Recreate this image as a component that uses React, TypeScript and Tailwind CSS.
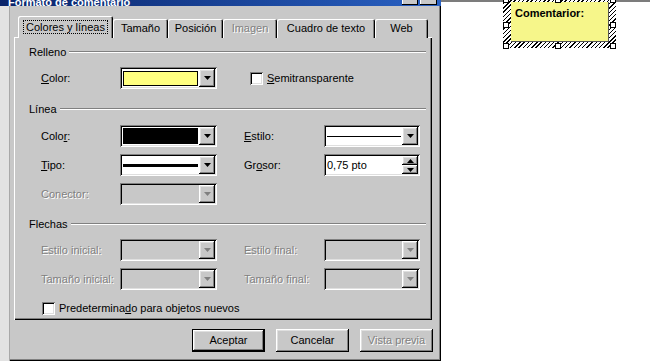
import type { ReactNode } from 'react';

const sunken =
  'shadow-[inset_1px_1px_#808080,inset_-1px_-1px_#fff,inset_2px_2px_#000,inset_-2px_-2px_#dfdfdf]';
const raised =
  'shadow-[inset_-1px_-1px_#000,inset_1px_1px_#fff,inset_-2px_-2px_#808080,inset_2px_2px_#dfdfdf]';
const dimText = 'text-[#808080] [text-shadow:1px_1px_0_#fff]';

function Arrow({ up, disabled }: { up?: boolean; disabled?: boolean }) {
  return (
    <svg width="7" height="4" viewBox="0 0 7 4">
      <path d={up ? 'M3.5 0L7 4H0z' : 'M0 0h7L3.5 4z'} fill={disabled ? '#808080' : '#000'} />
    </svg>
  );
}

function DropBtn({ disabled }: { disabled?: boolean }) {
  return (
    <div className={`flex h-full w-[16px] items-center justify-center bg-[#c8c8c8] ${raised}`}>
      <Arrow disabled={disabled} />
    </div>
  );
}

function Combo({ w = 'w-[97px]', disabled, children }: { w?: string; disabled?: boolean; children?: ReactNode }) {
  return (
    <div className={`flex h-[22px] ${w} p-[2px] ${disabled ? 'bg-[#c8c8c8]' : 'bg-white'} ${sunken}`}>
      <div className="flex flex-1 items-center px-[1px]">{children}</div>
      <DropBtn disabled={disabled} />
    </div>
  );
}

function Group({ title }: { title: string }) {
  return (
    <div className="flex h-[14px] items-center pl-[15px] pr-[6px]">
      <span>{title}</span>
      <div className="ml-[3px] h-[2px] flex-1 border-t border-b border-t-[#808080] border-b-white" />
    </div>
  );
}

function Check({ children }: { children: ReactNode }) {
  return (
    <div className="flex items-center gap-[4px]">
      <div className={`h-[13px] w-[13px] bg-white ${sunken}`} />
      <span>{children}</span>
    </div>
  );
}

function Row({ label, combo, right, rightCombo, dim }: { label: ReactNode; combo: ReactNode; right?: ReactNode; rightCombo?: ReactNode; dim?: boolean }) {
  return (
    <div className="flex h-[22px] items-center pl-[27px]">
      <div className={`w-[79px] ${dim ? dimText : ''}`}>{label}</div>
      {combo}
      {right && (
        <>
          <div className={`ml-[27px] w-[80px] ${dim ? dimText : ''}`}>{right}</div>
          {rightCombo}
        </>
      )}
    </div>
  );
}

function Tab({ label, dim }: { label: string; dim?: boolean }) {
  return (
    <div
      className={`flex h-[19px] items-center justify-center rounded-t-[2px] bg-[#c8c8c8] shadow-[inset_1px_1px_#fff,inset_-1px_0_#000,inset_-2px_0_#808080] ${dim ? dimText : ''}`}
    >
      {label}
    </div>
  );
}

function Button({ children, primary, disabled }: { children: ReactNode; primary?: boolean; disabled?: boolean }) {
  return (
    <div className={`h-[23px] w-[73px] ${primary ? 'border border-black' : ''}`}>
      <div className={`flex h-full w-full items-center justify-center bg-[#c8c8c8] ${raised} ${disabled ? dimText : ''}`}>
        {children}
      </div>
    </div>
  );
}

export default function App() {
  return (
    <div className="flex h-[362px] w-[650px] overflow-hidden bg-white font-['Liberation_Sans',Arial,sans-serif] text-[11px] text-black">
      {/* dialog */}
      <div className="flex h-[361px] w-[441px] flex-col bg-[#c8c8c8] shadow-[inset_-1px_-1px_#000,inset_-2px_-2px_#808080]">
        <div className="flex h-[6px] items-start justify-between overflow-hidden bg-gradient-to-r from-[#0a246a] to-[#2a62c4] pr-[4px]">
          <div className="-mt-[5px] pl-[8px] text-[11px] font-bold leading-[14px] text-white">Formato de comentario</div>
          <div className="flex gap-[2px]">
            <div className="h-[5px] w-[16px] bg-[#c8c8c8] shadow-[inset_-1px_-1px_#000,inset_1px_0_#fff]" />
            <div className="h-[5px] w-[17px] bg-[#c8c8c8] shadow-[inset_-1px_-1px_#000,inset_1px_0_#fff]" />
          </div>
        </div>

        <div className="flex flex-1">
          <div className="w-[10px] border-r border-[#a8a8a8] bg-[#e2e2e2]" />
          <div className="flex flex-col pl-[4px] pt-[10px]">
            {/* tabs */}
            <div className="relative z-10 -mb-[1px] flex h-[22px] items-end pl-[4px]">
              <div className="flex h-[22px] w-[95px] items-center justify-center rounded-t-[2px] bg-[#c8c8c8] shadow-[inset_1px_1px_#fff,inset_-1px_0_#000,inset_-2px_0_#808080]">
                <span className="border border-dotted border-black px-[2px] leading-[12px]">Colores y líneas</span>
              </div>
              <div className="w-[55px]"><Tab label="Tamaño" /></div>
              <div className="w-[55px]"><Tab label="Posición" /></div>
              <div className="w-[54px]"><Tab label="Imagen" dim /></div>
              <div className="w-[98px]"><Tab label="Cuadro de texto" /></div>
              <div className="w-[53px]"><Tab label="Web" /></div>
            </div>

            {/* panel */}
            <div className="flex h-[283px] w-[418px] flex-col pt-[8px] shadow-[inset_1px_1px_#fff,inset_-1px_-1px_#000,inset_-2px_-2px_#808080]">
              <Group title="Relleno" />
              <div className="mt-[8px] flex h-[22px] items-center pl-[27px]">
                <div className="w-[79px]"><u>C</u>olor:</div>
                <Combo>
                  <div className="h-[15px] w-full border border-black bg-[#ffff80]" />
                </Combo>
                <div className="ml-[33px]">
                  <Check><u>S</u>emitransparente</Check>
                </div>
              </div>

              <div className="mt-[13px]"><Group title="Línea" /></div>
              <div className="mt-[9px]">
                <Row
                  label={<>Colo<u>r</u>:</>}
                  combo={<Combo><div className="h-[16px] w-full bg-black" /></Combo>}
                  right={<><u>E</u>stilo:</>}
                  rightCombo={<Combo w="w-[96px]"><div className="h-[1px] w-full bg-black" /></Combo>}
                />
              </div>
              <div className="mt-[7px]">
                <Row
                  label={<><u>T</u>ipo:</>}
                  combo={<Combo><div className="h-[3px] w-full bg-black" /></Combo>}
                  right={<>Gr<u>o</u>sor:</>}
                  rightCombo={
                    <div className={`flex h-[22px] w-[96px] bg-white p-[2px] ${sunken}`}>
                      <div className="flex flex-1 items-center pl-[1px]">0,75 pto</div>
                      <div className="flex w-[16px] flex-col">
                        <div className={`flex h-[9px] items-center justify-center bg-[#c8c8c8] ${raised}`}><Arrow up /></div>
                        <div className={`flex h-[9px] items-center justify-center bg-[#c8c8c8] ${raised}`}><Arrow /></div>
                      </div>
                    </div>
                  }
                />
              </div>
              <div className="mt-[7px]">
                <Row dim label="Conector:" combo={<Combo disabled />} />
              </div>

              <div className="mt-[12px]"><Group title="Flechas" /></div>
              <div className="mt-[8px]">
                <Row dim label="Estilo inicial:" combo={<Combo disabled />} right="Estilo final:" rightCombo={<Combo w="w-[96px]" disabled />} />
              </div>
              <div className="mt-[7px]">
                <Row dim label="Tamaño inicial:" combo={<Combo disabled />} right="Tamaño final:" rightCombo={<Combo w="w-[96px]" disabled />} />
              </div>
              <div className="mt-[10px] pl-[28px]">
                <Check>Predetermina<u>d</u>o para objetos nuevos</Check>
              </div>
            </div>

            {/* buttons */}
            <div className="mt-[9px] flex w-[419px] justify-end gap-[11px]">
              <Button primary>Aceptar</Button>
              <Button>Cancelar</Button>
              <Button disabled>Vista previa</Button>
            </div>
          </div>
        </div>
      </div>

      {/* sheet area */}
      <div className="relative flex-1 bg-white">
        <div className="h-[2px] bg-[#7c7c7c]" />
        <div className="absolute left-[62px] top-[-5px] h-[53px] w-[113px] bg-[repeating-linear-gradient(135deg,#000_0_1px,#fff_1px_3px)] pb-[6px] pl-[8px] pr-[7px] pt-[7px]">
          <div className="h-full w-full border-b border-r border-[#555] bg-[#f6f68a] pl-[4px] pt-[4px] text-[11px] font-bold leading-[14px]">
            Comentarior:
          </div>
          {[
            'left-[0px] top-[2px]',
            'left-[52px] top-[2px]',
            'left-[107px] top-[2px]',
            'left-[0px] top-[27px]',
            'left-[107px] top-[27px]',
            'left-[0px] top-[48px]',
            'left-[52px] top-[48px]',
            'left-[107px] top-[48px]',
          ].map((pos) => (
            <div key={pos} className={`absolute h-[6px] w-[6px] border border-black bg-white ${pos}`} />
          ))}
        </div>
      </div>
    </div>
  );
}
